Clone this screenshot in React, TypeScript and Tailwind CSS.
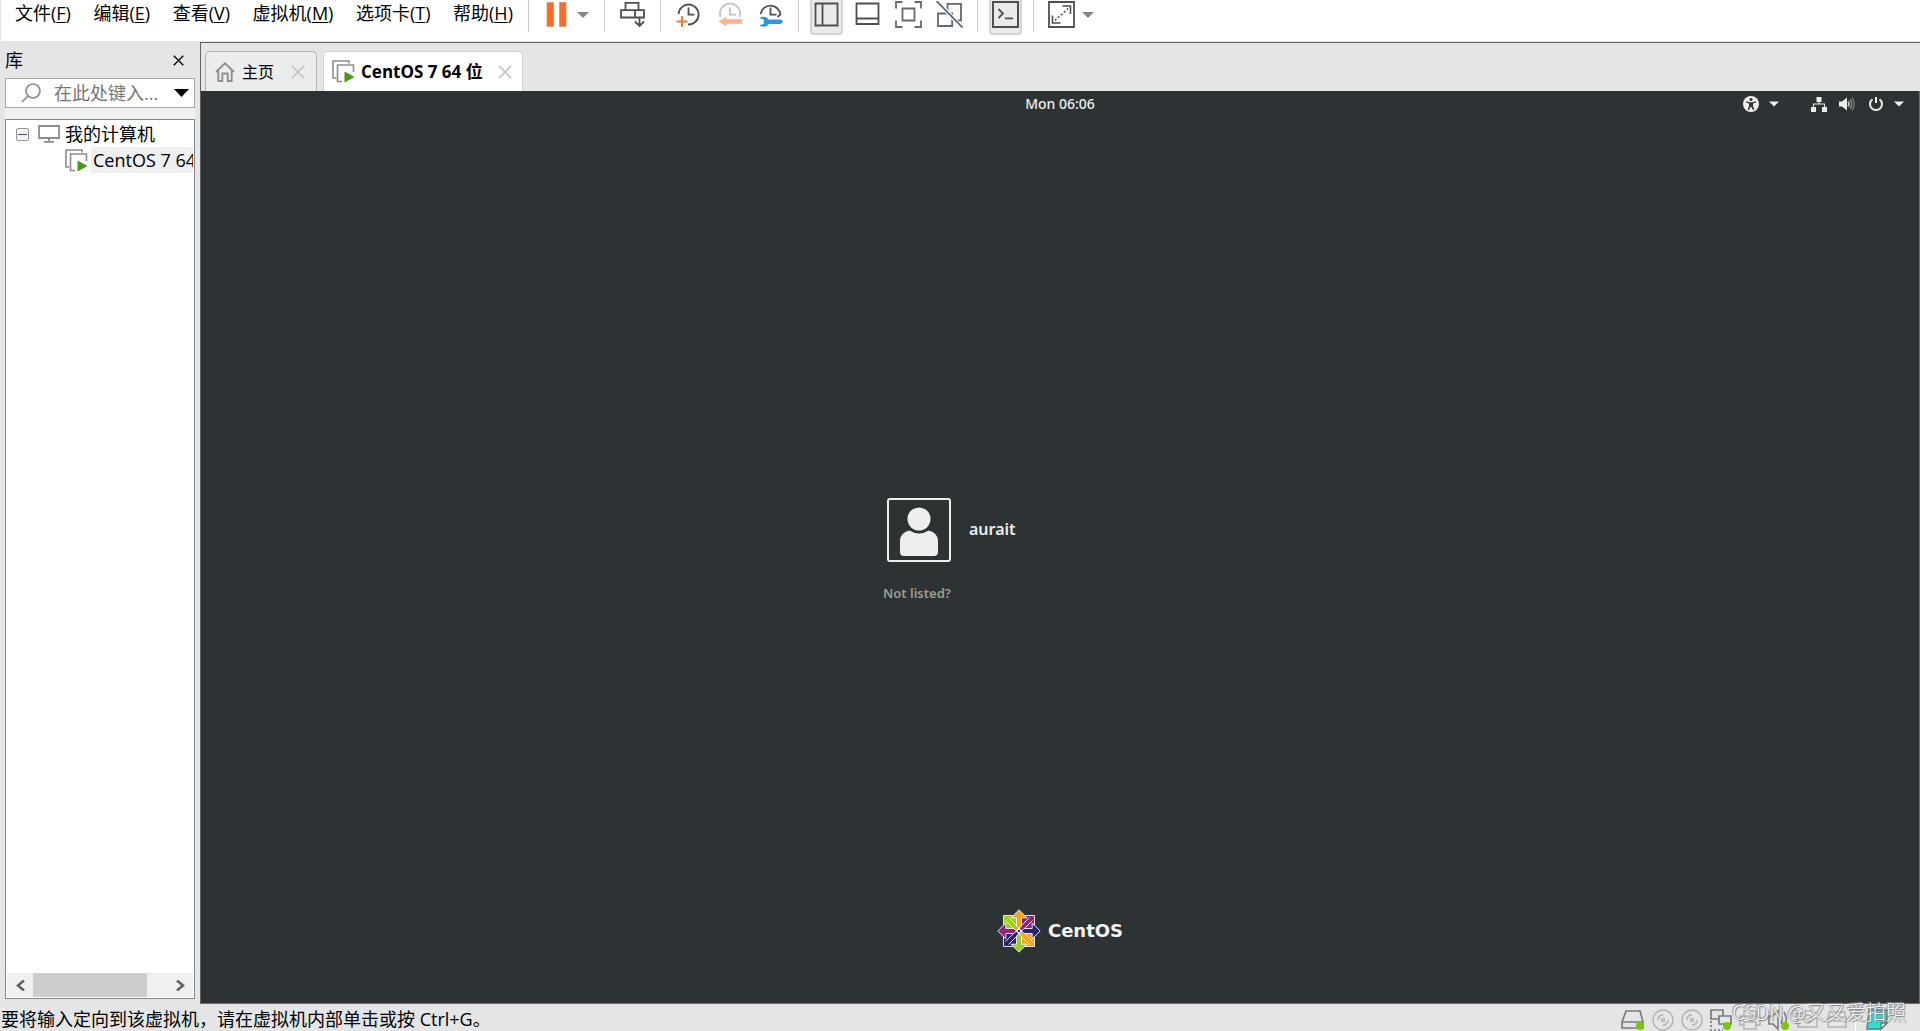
import type { ReactNode } from "react";

const INK = "#4d4f51";
const ORANGE = "#ff6a1f";

function Glyph({ children }: { children: ReactNode }) {
  return (
    <svg width="27" height="27" viewBox="0 0 27 27" fill="none" stroke={INK} strokeWidth="1.8" aria-hidden="true">
      {children}
    </svg>
  );
}

function ToolButton({ label, active, children }: { label: string; active?: boolean; children: ReactNode }) {
  return (
    <button
      type="button"
      aria-label={label}
      aria-pressed={active}
      className={
        active
          ? "flex h-[35px] w-[33px] items-start justify-center rounded-b-[4px] border-x-2 border-b-2 border-[#d3d4d5] bg-[#e9eaec] pt-px"
          : "flex h-[35px] w-[33px] items-start justify-center pt-px"
      }
    >
      <Glyph>{children}</Glyph>
    </button>
  );
}

function CaretButton({ label }: { label: string }) {
  return (
    <button type="button" aria-label={label} className="flex h-[30px] w-5 items-center justify-center">
      <svg width="12" height="6" viewBox="0 0 12 6" aria-hidden="true">
        <path d="M0 0h12L6 6z" fill="#858585" />
      </svg>
    </button>
  );
}

function Group({ children }: { children: ReactNode }) {
  return (
    <div className="flex shrink-0">
      <div className="h-8 w-px bg-[#c9c9c9]" />
      <div className="flex px-[11px]">{children}</div>
    </div>
  );
}

function MenuBar() {
  const menus = [
    ["文件", "F"],
    ["编辑", "E"],
    ["查看", "V"],
    ["虚拟机", "M"],
    ["选项卡", "T"],
    ["帮助", "H"],
  ];
  return (
    <nav className="flex h-[26px] w-[527px] shrink-0 items-center justify-between pr-[15px] pl-[14px]">
      {menus.map(([name, key]) => (
        <button key={key} type="button" className="whitespace-nowrap text-lg leading-[26px]">
          {name}(<span className="underline underline-offset-2">{key}</span>)
        </button>
      ))}
    </nav>
  );
}

function Toolbar() {
  return (
    <div className="flex shrink-0">
      <Group>
        <ToolButton label="挂起">
          <path d="M4 1.5h6.500v24H4zM16.500 1.500H23v24h-6.500z" fill={ORANGE} stroke="#c98a66" strokeWidth="0.6" />
        </ToolButton>
        <CaretButton label="电源选项" />
      </Group>
      <Group>
        <ToolButton label="发送 Ctrl+Alt+Del">
          <path d="M6.500 9V1.800h13V9M2 9.200h23v7.300H2zM16 9.200v7.300M20.500 17v8M16 20.500l4.500 4.500 4.500-4.500" />
        </ToolButton>
      </Group>
      <Group>
        <div className="flex gap-2">
          <ToolButton label="拍摄快照">
            <path d="M3.600 13A10 10 0 1 1 13 23.500M13.500 6.500v7.200h6" />
            <path d="M7 15v11M1.500 20.400h11" stroke="#f07a3a" strokeWidth="2" />
          </ToolButton>
          <ToolButton label="恢复快照">
            <path d="M4.600 16A10 10 0 1 1 23.400 16M14 6.500v7.200h6" stroke="#c4c4c4" />
            <path d="M2.500 20.500l8-5v2.800H26v4.400H10.500v2.800z" fill="#ffb28a" stroke="none" />
          </ToolButton>
          <ToolButton label="管理快照">
            <path d="M3.600 13A10 10 0 0 1 23.400 13.500L20.500 16M13.500 6.500v7.200h6" />
            <path
              d="M2.500 17.200C6 14.600 10 15.500 11.800 18.600H23.500a2.100 2.100 0 0 1 0 4.300H11.800C10 26 6 26.600 2.500 24.200L6.800 22.800V18.600z"
              fill="#2f98dc"
              stroke="none"
            />
          </ToolButton>
        </div>
      </Group>
      <Group>
        <div className="flex gap-2">
          <ToolButton label="显示库" active>
            <path d="M2.500 2.500h22v22h-22zM9.500 2.500v22" />
          </ToolButton>
          <ToolButton label="显示缩略图栏">
            <path d="M2.500 2.500h22v20.500h-22zM2.500 17.500h22" />
          </ToolButton>
          <ToolButton label="全屏">
            <path d="M1 7.500V1h6.500M19.500 1H26v6.500M26 19.500V26h-6.500M7.500 26H1v-6.500M7.500 7.500h12v12h-12z" stroke="#68696b" />
          </ToolButton>
          <ToolButton label="Unity">
            <path d="M11.500 11V2.800h13.500v16.700h-8M2 12.500h14.200V25H2z" stroke="#5b6a76" />
            <path d="M1 0l25.500 27" stroke="#fff" strokeWidth="4" />
            <path d="M.5 0L26.500 26.500" stroke="#5b6a76" />
          </ToolButton>
        </div>
      </Group>
      <Group>
        <ToolButton label="控制台视图" active>
          <path d="M1 1h25v25H1z" strokeWidth="2" />
          <path d="M6.500 8l4.500 4.500L6.500 17M13 17.300h8" />
        </ToolButton>
      </Group>
      <Group>
        <ToolButton label="拉伸客户机">
          <path d="M1 1h25v25H1z" strokeWidth="1.800" />
          <path d="M14.500 5h8v8M4.500 14.500v7.500h8" strokeWidth="1.600" />
          <path d="M7 19.500L20 7.500" strokeWidth="1.600" strokeDasharray="2 2" />
        </ToolButton>
        <CaretButton label="拉伸选项" />
      </Group>
    </div>
  );
}

function VmIcon() {
  return (
    <svg width="23" height="23" viewBox="0 0 23 23" fill="none" className="shrink-0" aria-hidden="true">
      <path d="M4.500 18H1V1h16v2.500" stroke="#8d8d8d" strokeWidth="1.600" />
      <path d="M10 21.500H5.500V5h16v7" stroke="#8d8d8d" strokeWidth="1.600" />
      <path d="M12.500 11.500l10 5.500-10 5.500z" fill="#479b13" />
    </svg>
  );
}

function Cross({ color, size }: { color: string; size: number }) {
  return (
    <svg width={size} height={size} viewBox="0 0 12 12" fill="none" stroke={color} strokeWidth="1.500" aria-hidden="true">
      <path d="M.8.8l10.400 10.400M11.200.8L.8 11.200" />
    </svg>
  );
}

function Library() {
  return (
    <aside className="flex w-[200px] shrink-0 flex-col px-[5px] pb-[5px]">
      <div className="flex h-9 items-center justify-between pr-[11px]">
        <h2 className="text-lg leading-6">库</h2>
        <button type="button" aria-label="关闭库">
          <Cross color="#000" size={11} />
        </button>
      </div>
      <div className="flex h-[30px] items-center border border-[#a5a6a8] bg-white pr-[5px] pl-[15px]">
        <svg width="20" height="20" viewBox="0 0 20 20" fill="none" stroke="#8d8d8d" strokeWidth="1.700" className="shrink-0" aria-hidden="true">
          <circle cx="12" cy="8" r="7" />
          <path d="M7 13l-6 6" />
        </svg>
        <input
          aria-label="搜索库"
          placeholder="在此处键入..."
          className="ml-[13px] w-0 flex-1 bg-transparent text-lg leading-6 outline-none placeholder:text-[#767676]"
        />
        <button type="button" aria-label="搜索选项">
          <svg width="15" height="8" viewBox="0 0 15 8" aria-hidden="true">
            <path d="M0 0h15L7.500 8z" fill="#000" />
          </svg>
        </button>
      </div>
      <div className="h-[11px] bg-[#f0f0f0]" />
      <div className="flex flex-1 flex-col border border-[#82868f] bg-white p-px">
        <ul className="flex-1 text-lg leading-[26px]">
          <li>
            <div className="flex h-[26px] items-center pl-[9px]">
              <button type="button" aria-label="折叠" className="flex size-[13px] items-center justify-center rounded-[2px] border border-[#959595] bg-[#f3f3f3]">
                <span className="h-px w-[9px] bg-[#3a55a4]" />
              </button>
              <svg width="22" height="18" viewBox="0 0 22 18" fill="none" stroke="#8d8d8d" strokeWidth="1.800" className="ml-[9px] shrink-0" aria-hidden="true">
                <path d="M1 1h20v12H1zM11 13v3.500M6 16.800h10" />
              </svg>
              <span className="ml-[5px]">我的计算机</span>
            </div>
            <ul>
              <li className="flex h-[26px] items-center overflow-hidden pl-[58px]">
                <VmIcon />
                <span className="ml-[3px] flex-1 overflow-hidden bg-[#efefef] pl-[2px] whitespace-nowrap">CentOS 7 64 位</span>
              </li>
            </ul>
          </li>
        </ul>
        <div className="flex h-6 items-center bg-[#f0f0f0]">
          <button type="button" aria-label="向左滚动" className="flex w-[26px] justify-center">
            <svg width="9" height="11" viewBox="0 0 9 11" fill="none" stroke="#606060" strokeWidth="2.500" aria-hidden="true">
              <path d="M8 .5l-6 5 6 5" />
            </svg>
          </button>
          <div className="h-6 flex-1">
            <div className="h-6 w-[85%] bg-[#cdcdcd]" />
          </div>
          <button type="button" aria-label="向右滚动" className="flex w-[26px] justify-center">
            <svg width="9" height="11" viewBox="0 0 9 11" fill="none" stroke="#606060" strokeWidth="2.500" aria-hidden="true">
              <path d="M1 .5l6 5-6 5" />
            </svg>
          </button>
        </div>
      </div>
    </aside>
  );
}

function Tabs() {
  return (
    <div role="tablist" className="flex h-12 items-end gap-[6px] pl-1">
      <div className="flex h-10 w-[112px] items-center rounded-t-[5px] border border-b-0 border-[#b2b3b5] bg-[#ebecee] pl-[9px]">
        <button type="button" role="tab" aria-selected="false" className="flex items-center gap-[7px] text-base">
          <svg width="20" height="20" viewBox="0 0 20 20" fill="none" stroke="#8d8d8d" strokeWidth="1.800" aria-hidden="true">
            <path d="M1 10l9-8.700L19 10M3.300 8.500V19h4v-7.500h5.400V19h4V8.500" />
          </svg>
          主页
        </button>
        <button type="button" aria-label="关闭主页" className="ml-[17px]">
          <Cross color="#c6c6c6" size={14} />
        </button>
      </div>
      <div className="flex h-10 w-[200px] items-center rounded-t-[5px] border border-b-0 border-[#d0d1d3] bg-white pl-2">
        <button type="button" role="tab" aria-selected="true" className="flex items-center gap-[6px] text-[17px] font-bold whitespace-nowrap">
          <VmIcon />
          CentOS 7 64 位
        </button>
        <button type="button" aria-label="关闭 CentOS 7 64 位" className="mr-[10px] ml-auto">
          <Cross color="#c6c6c6" size={14} />
        </button>
      </div>
    </div>
  );
}

function SmallCaret() {
  return (
    <svg width="10" height="6" viewBox="0 0 10 6" aria-hidden="true">
      <path d="M0 .5h10L5 5.500z" fill="#eeeeec" />
    </svg>
  );
}

function GuestBar() {
  return (
    <div className="grid h-[26px] grid-cols-3 items-center text-[#eeeeec]">
      <span />
      <span className="text-center font-['Noto_Sans'] text-sm leading-5 font-medium">Mon 06:06</span>
      <div className="flex items-center justify-end pr-[15px]">
        <button type="button" aria-label="Accessibility" className="flex items-center gap-[10px]">
          <svg width="16" height="16" viewBox="0 0 16 16" aria-hidden="true">
            <circle cx="8" cy="8" r="8" fill="#eeeeec" />
            <circle cx="8" cy="3.500" r="1.600" fill="#2e3436" />
            <path d="M3 5.300l3.500.9h3L13 5.300v1.200l-3 .9v2.300l1.300 4-1.200.4L8 10.500l-2.100 3.600-1.200-.4 1.300-4V7.400l-3-.9z" fill="#2e3436" />
          </svg>
          <SmallCaret />
        </button>
        <button type="button" aria-label="System" className="ml-8 flex items-center">
          <svg width="16" height="16" viewBox="0 0 16 16" fill="#eeeeec" aria-hidden="true">
            <path d="M5.500 1h5v5h-2v1.500H14V11h2v5h-5v-5h2V8.500H3V11h2v5H0v-5h2V7.500h5.500V6h-2z" />
          </svg>
          <svg width="16" height="16" viewBox="0 0 16 16" fill="none" strokeWidth="1.500" className="ml-3" aria-hidden="true">
            <path d="M0 5.500h3L8 1.500v13l-5-4H0z" fill="#eeeeec" />
            <path d="M9 5.500q2 2.500 0 5" stroke="#c5c7c7" />
            <path d="M11 3.500q3.500 4.500 0 9" stroke="#8f9394" />
            <path d="M13 1.500q4.500 6.500 0 13" stroke="#6b7072" />
          </svg>
          <svg width="16" height="16" viewBox="0 0 16 16" fill="none" stroke="#eeeeec" strokeWidth="2" className="mr-[10px] ml-[13px]" aria-hidden="true">
            <path d="M4.500 3.200a6 6 0 1 0 7 0M8 1v6" />
          </svg>
          <SmallCaret />
        </button>
      </div>
    </div>
  );
}

function CentosMark() {
  return (
    <svg width="44" height="44" viewBox="0 0 44 44" stroke="#f4f4f4" strokeWidth="0.9" aria-hidden="true">
      <path d="M6.500 6.500h15v15h-15z" fill="#9ccd2a" />
      <path d="M22.500 6.500h15v15h-15z" fill="#932279" />
      <path d="M6.500 22.500h15v15h-15z" fill="#262577" />
      <path d="M22.500 22.500h15v15h-15z" fill="#efa724" />
      <path
        d="M22 19L11.500 8.500M19 22L8.500 11.500M22 19L32.500 8.500M25 22L35.500 11.500M22 25L11.500 35.500M19 22L8.500 32.500M22 25L32.500 35.500M25 22L35.500 32.500"
        fill="none"
      />
      <path d="M22 .8l8 8h-5.500V17L22 19.500 19.500 17V8.800H14z" fill="#efa724" />
      <path d="M43.200 22l-8 8v-5.500H27L24.500 22l2.500-2.500h8.200V14z" fill="#262577" />
      <path d="M22 43.200l-8-8h5.500V27l2.500-2.500 2.500 2.500v8.200H30z" fill="#9ccd2a" />
      <path d="M.8 22l8-8v5.500H17l2.500 2.500-2.500 2.500H8.800V30z" fill="#932279" />
      <path d="M20.500 20.500h3v3h-3z" fill="#2e3436" />
    </svg>
  );
}

function GuestScreen() {
  return (
    <section className="flex flex-1 flex-col border-r border-b border-[#6a6c6e] bg-[#2d3335]">
      <GuestBar />
      <div className="flex flex-1 flex-col justify-center pt-[74px]">
        <div className="mx-auto w-[354px] text-[#eeeeec]">
          <button type="button" className="ml-1 flex items-center gap-[18px]">
            <span className="flex size-16 items-center justify-center rounded-[3px] border-2 border-[#eeeeec]">
              <svg width="48" height="56" viewBox="0 0 48 56" fill="#eeeeec" aria-hidden="true">
                <circle cx="24" cy="17" r="11.500" />
                <path d="M14.500 28.500q9.500 6 19 0C40 30 43 34 43 39v11q0 4-4 4H9q-4 0-4-4V39c0-5 3-9 9.500-10.500z" />
              </svg>
            </span>
            <span className="pb-px font-['Noto_Sans'] text-base font-semibold">aurait</span>
          </button>
          <button type="button" className="mt-[21px] block font-['Noto_Sans'] text-[13px] leading-5 font-semibold text-[#9c9c92]">
            Not listed?
          </button>
        </div>
      </div>
      <div className="flex h-[94px] items-start justify-center gap-[7px]">
        <CentosMark />
        <span className="pt-[10px] font-['DejaVu_Sans'] text-lg leading-6 font-bold text-[#f4f4f4]">CentOS</span>
      </div>
    </section>
  );
}

function DeviceIcons() {
  return (
    <div className="flex items-start gap-[7px] pt-[5px] pr-8">
      <svg width="24" height="22" viewBox="0 0 24 22" fill="none" stroke="#7b7b7b" strokeWidth="1.700" aria-hidden="true">
        <path d="M5 2h14l3 11v6H1v-6zM1 13h21" />
        <circle cx="19" cy="17" r="4" fill="#7ac70c" stroke="none" />
      </svg>
      {[0, 1].map((n) => (
        <svg key={n} width="22" height="22" viewBox="0 0 22 22" fill="none" stroke="#b1b2b4" strokeWidth="1.400" aria-hidden="true">
          <circle cx="11" cy="11" r="10" />
          <circle cx="11" cy="11" r="1.500" />
          <path d="M6 11q0-5 5-5M16 11q0 5-5 5" />
        </svg>
      ))}
      <svg width="22" height="22" viewBox="0 0 22 22" fill="none" stroke="#7b7b7b" strokeWidth="1.700" aria-hidden="true">
        <path d="M1 1h12v9H1z" />
        <path d="M9 7h12v8H9z" fill="#e3e5e7" />
        <path d="M1 12v9h12" strokeDasharray="2 2" />
        <circle cx="17" cy="17" r="4" fill="#7ac70c" stroke="none" />
      </svg>
      <svg width="22" height="22" viewBox="0 0 22 22" fill="none" stroke="#b1b2b4" strokeWidth="1.500" aria-hidden="true">
        <path d="M5 7V2h12v5M5 16H1V7h20v9h-4M5 13h12v7H5z" />
      </svg>
      <svg width="22" height="22" viewBox="0 0 22 22" fill="none" stroke="#7b7b7b" strokeWidth="1.600" aria-hidden="true">
        <path d="M1 7h4l5-5v18l-5-5H1zM13 7q2 4 0 8M16 3q4 7 1 12" />
        <circle cx="17" cy="17" r="4" fill="#7ac70c" stroke="none" />
      </svg>
      <svg width="22" height="22" viewBox="0 0 22 22" fill="none" stroke="#b1b2b4" strokeWidth="1.500" aria-hidden="true">
        <path d="M1 4h5l2-2h6l2 2h4v14H1z" />
        <circle cx="11" cy="10" r="4" />
      </svg>
      <svg width="22" height="22" viewBox="0 0 22 22" fill="none" stroke="#b1b2b4" strokeWidth="1.500" aria-hidden="true">
        <path d="M3 8V3h16v5M2 8h18v10H2zM7 12h8" />
      </svg>
      <span className="mr-[3px] h-[22px] w-px bg-white" />
      <svg width="22" height="22" viewBox="0 0 22 22" strokeWidth="1.400" aria-hidden="true">
        <path d="M3 1h18v13l-6 6H1z" fill="#31e0cb" stroke="#5b7f7c" />
        <path d="M21 14h-6v6z" fill="#dff5f2" stroke="#5b7f7c" />
      </svg>
    </div>
  );
}

export default function App() {
  return (
    <div className="flex h-screen flex-col overflow-hidden bg-[#e3e5e7] font-['Open_Sans','Noto_Sans_CJK_SC',sans-serif] text-black">
      <header className="flex h-[41px] shrink-0 items-start overflow-hidden border-l border-[#e3e5e7] bg-white">
        <MenuBar />
        <Toolbar />
      </header>
      <main className="flex flex-1 pt-px">
        <Library />
        <div className="flex flex-1 flex-col border-t border-l border-[#606265]">
          <Tabs />
          <GuestScreen />
        </div>
      </main>
      <footer className="relative flex h-[27px] shrink-0 items-start justify-between overflow-visible">
        <p className="pl-px text-lg leading-[30px]">要将输入定向到该虚拟机，请在虚拟机内部单击或按 Ctrl+G。</p>
        <DeviceIcons />
        <span className="absolute right-[14px] bottom-[5px] font-['Noto_Sans_CJK_SC',sans-serif] text-xl leading-7 font-light whitespace-nowrap text-[#f4f4f4] [text-shadow:-1px_-1px_1px_#8a8c8e,1px_1px_1px_#77797b]">
          CSDN @又又爱拍照
        </span>
      </footer>
    </div>
  );
}
